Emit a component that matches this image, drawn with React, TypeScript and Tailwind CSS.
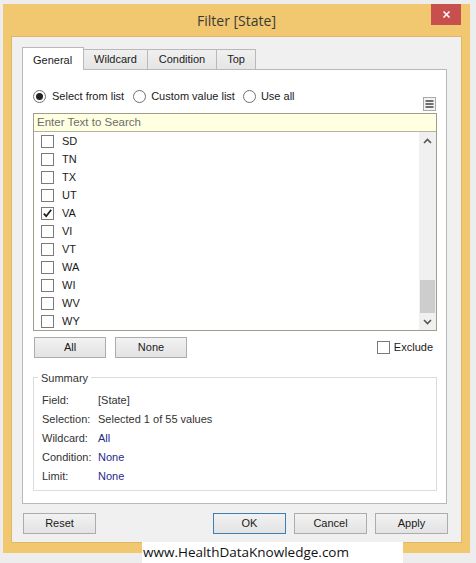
import React from "react";

const states = ["SD", "TN", "TX", "UT", "VA", "VI", "VT", "WA", "WI", "WV", "WY"];

function Check({ checked }: { checked?: boolean }) {
  return (
    <div className="w-[13px] h-[13px] border border-[#7a7a7a] bg-white flex items-center justify-center shrink-0">
      {checked && (
        <svg width="11" height="11" viewBox="0 0 11 11">
          <path d="M1.8 5.6 L4.2 8.2 L9.2 1.8" fill="none" stroke="#1a1a1a" strokeWidth="1.7" />
        </svg>
      )}
    </div>
  );
}

function Radio({ on }: { on?: boolean }) {
  return (
    <div className="w-[13px] h-[13px] rounded-full border border-[#6f6f6f] bg-white flex items-center justify-center shrink-0">
      {on && <div className="w-[7px] h-[7px] rounded-full bg-[#222]" />}
    </div>
  );
}

function Btn({ children, w, primary }: { children: React.ReactNode; w: string; primary?: boolean }) {
  return (
    <div
      className={
        "h-[21px] flex items-center justify-center text-[11px] text-[#1a1a1a] bg-gradient-to-b from-[#f2f2f2] to-[#e3e3e3] border " +
        (primary ? "border-[#3c7fb1] " : "border-[#acacac] ") +
        w
      }
    >
      {children}
    </div>
  );
}

export default function App() {
  return (
    <div
      className="w-[476px] h-[563px] bg-[#ededed] pl-[3px] pt-[4px] relative overflow-hidden"
      style={{ fontFamily: '"Liberation Sans", Arial, sans-serif' }}
    >
      <div className="w-[467px] h-[549px] bg-[#f1c76f] flex flex-col">
        {/* title bar */}
        <div className="h-[32px] flex items-start">
          <div className="w-[39px]" />
          <div className="flex-1 text-center text-[14px] text-[#3a3a3a] pt-[6px]" style={{ fontFamily: '"Open Sans", sans-serif' }}>
            Filter [State]
          </div>
          <div className="w-[39px] flex">
            <div className="w-[30px] h-[21px] bg-[#c7504e] flex items-center justify-center">
              <svg width="9" height="9" viewBox="0 0 9 9">
                <path d="M1.5 1.5 L7.5 7.5 M7.5 1.5 L1.5 7.5" stroke="#ffffff" strokeWidth="1.5" />
              </svg>
            </div>
          </div>
        </div>
        {/* client */}
        <div className="mx-[8px] h-[507px] bg-[#f0f0f0] border border-[#dcb966] pl-[10px] pr-[14px] pt-[9px] flex flex-col">
          {/* tabs */}
          <div className="flex items-end h-[23px] text-[11px] text-[#1a1a1a]">
            <div className="w-[62px] h-[23px] bg-white border border-b-0 border-[#b9b9b9] pl-[10px] pt-[4px] relative top-[1px] z-10">General</div>
            <div className="w-[64px] h-[20px] bg-gradient-to-b from-[#f0f0f0] to-[#e5e5e5] border border-l-0 border-b-0 border-[#b9b9b9] flex items-center justify-center">Wildcard</div>
            <div className="w-[69px] h-[20px] bg-gradient-to-b from-[#f0f0f0] to-[#e5e5e5] border border-l-0 border-b-0 border-[#b9b9b9] flex items-center justify-center">Condition</div>
            <div className="w-[39px] h-[20px] bg-gradient-to-b from-[#f0f0f0] to-[#e5e5e5] border border-l-0 border-b-0 border-[#b9b9b9] flex items-center justify-center">Top</div>
          </div>
          {/* panel */}
          <div className="w-[425px] h-[435px] bg-white border border-[#b9b9b9] pl-[10px] pr-[9px] pt-[19px] text-[11px] text-[#1a1a1a] flex flex-col">
            <div className="flex items-start h-[24px]">
              <div className="flex items-center h-[14px]">
                <Radio on />
                <span className="ml-[6px]">Select from list</span>
                <div className="ml-[9px]"><Radio /></div>
                <span className="ml-[5px]">Custom value list</span>
                <div className="ml-[8px]"><Radio /></div>
                <span className="ml-[5px]">Use all</span>
              </div>
              <div className="flex-1" />
              <div className="mt-[8px] mr-[1px] w-[13px] h-[14px] border border-[#a8a8a8] bg-[#f4f4f4] flex items-center justify-center">
                <svg width="9" height="8" viewBox="0 0 9 8">
                  <path d="M0.5 1 H8.5 M0.5 4 H8.5 M0.5 7 H8.5" stroke="#444" strokeWidth="1.3" />
                </svg>
              </div>
            </div>
            {/* search + list */}
            <div className="border border-[#9e9e8e] flex flex-col">
              <div className="h-[18px] bg-[#ffffe1] border-b border-[#b5b59a] pl-[3px] flex items-center text-[#6d6d6d] text-[11.5px]">
                Enter Text to Search
              </div>
              <div className="h-[198px] flex">
                <div className="flex-1 flex flex-col">
                  {states.map((s) => (
                    <div key={s} className="h-[18px] flex items-center pl-[7px]">
                      <Check checked={s === "VA"} />
                      <span className="ml-[8px]">{s}</span>
                    </div>
                  ))}
                </div>
                <div className="w-[17px] bg-[#f0f0f0] flex flex-col items-center">
                  <div className="h-[17px] flex items-center justify-center">
                    <svg width="9" height="6" viewBox="0 0 9 6">
                      <path d="M1 5 L4.5 1.5 L8 5" fill="none" stroke="#555" strokeWidth="1.6" />
                    </svg>
                  </div>
                  <div className="flex-1" />
                  <div className="w-[15px] h-[33px] bg-[#cdcdcd]" />
                  <div className="h-[17px] flex items-center justify-center">
                    <svg width="9" height="6" viewBox="0 0 9 6">
                      <path d="M1 1 L4.5 4.5 L8 1" fill="none" stroke="#555" strokeWidth="1.6" />
                    </svg>
                  </div>
                </div>
              </div>
            </div>
            {/* All / None / Exclude */}
            <div className="flex items-center mt-[6px] h-[21px]">
              <div className="ml-[1px]"><Btn w="w-[72px]">All</Btn></div>
              <div className="ml-[9px]"><Btn w="w-[72px]">None</Btn></div>
              <div className="flex-1" />
              <Check />
              <span className="ml-[4px] mr-[4px]">Exclude</span>
            </div>
            {/* Summary */}
            <div className="mt-[19px] w-[404px] h-[114px] border border-[#dcdcdc] relative pl-[8px] pt-[13px]">
              <div className="absolute -top-[8px] left-[4px] bg-white px-[3px] text-[#333]">Summary</div>
              <div className="grid grid-cols-[56px_1fr] auto-rows-[19px] items-center text-[#333]">
                <span>Field:</span>
                <span>[State]</span>
                <span>Selection:</span>
                <span>Selected 1 of 55 values</span>
                <span>Wildcard:</span>
                <span className="text-[#1f2a8a]">All</span>
                <span>Condition:</span>
                <span className="text-[#1f2a8a]">None</span>
                <span>Limit:</span>
                <span className="text-[#1f2a8a]">None</span>
              </div>
            </div>
          </div>
          {/* bottom buttons */}
          <div className="flex mt-[9px] -mr-[1px]">
            <div className="ml-[1px]"><Btn w="w-[73px]">Reset</Btn></div>
            <div className="flex-1" />
            <Btn w="w-[73px]" primary>OK</Btn>
            <div className="ml-[8px]"><Btn w="w-[73px]">Cancel</Btn></div>
            <div className="ml-[8px]"><Btn w="w-[73px]">Apply</Btn></div>
          </div>
        </div>
      </div>
      <div
        className="absolute left-[142px] top-[542px] w-[261px] h-[21px] bg-white text-[13.5px] text-[#111] pl-[1px] leading-[21px]"
        style={{ fontFamily: '"Open Sans", sans-serif' }}
      >
        www.HealthDataKnowledge.com
      </div>
    </div>
  );
}
